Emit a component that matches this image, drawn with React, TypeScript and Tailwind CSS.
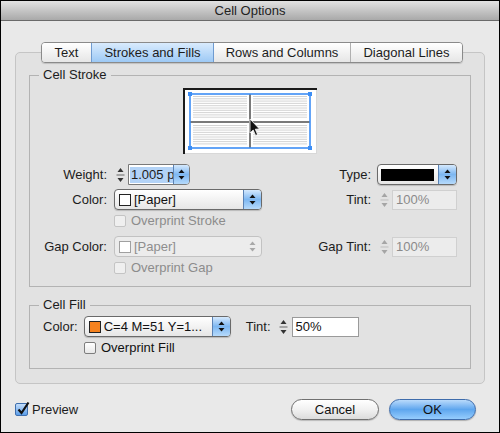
import React from 'react';

// small up/down arrow pair used by popups and steppers
function Arrows({ color = '#111', w = 7, h = 11 }: { color?: string; w?: number; h?: number }) {
  return (
    <svg width={w} height={h} viewBox="0 0 7 11">
      <polygon points="0.5,4 3.5,0.5 6.5,4" fill={color} />
      <polygon points="0.5,7 3.5,10.5 6.5,7" fill={color} />
    </svg>
  );
}

function Stepper({ disabled = false }: { disabled?: boolean }) {
  const c = disabled ? '#a5a5a5' : '#333';
  return (
    <div className="flex h-[20px] w-[14px] flex-col items-center justify-center">
      <svg width="9" height="18" viewBox="0 0 9 18">
        <polygon points="1.5,6 4.5,2 7.5,6" fill={c} />
        <line x1="0.5" y1="9" x2="8.5" y2="9" stroke={disabled ? '#bdbdbd' : '#666'} strokeWidth="1" />
        <polygon points="1.5,12 4.5,16 7.5,12" fill={c} />
      </svg>
    </div>
  );
}

function Popup({
  width,
  children,
  disabled = false,
}: {
  width: string;
  children: React.ReactNode;
  disabled?: boolean;
}) {
  if (disabled) {
    return (
      <div className={`flex h-[21px] ${width} overflow-hidden rounded-[4px] border border-[#c2c2c2] bg-[#ececec]`}>
        <div className="flex flex-1 items-center gap-[3px] pl-[4px] text-[#8e8e8e]">{children}</div>
        <div className="flex w-[18px] items-center justify-center">
          <Arrows color="#a8a8a8" />
        </div>
      </div>
    );
  }
  return (
    <div
      className={`flex h-[21px] ${width} overflow-hidden rounded-[4px] border border-[#6a6a6a] bg-linear-to-b from-white to-[#e6e6e6] shadow-[0_1px_1px_rgba(0,0,0,0.18)]`}
    >
      <div className="flex min-w-0 flex-1 items-center gap-[3px] pl-[4px] text-[#111]">{children}</div>
      <div className="flex w-[18px] items-center justify-center border-l border-[#5b82b4] bg-linear-to-b from-[#d5e9fd] via-[#7db7f1] to-[#b6dafb]">
        <Arrows />
      </div>
    </div>
  );
}

function Swatch({ color = '#fff', disabled = false }: { color?: string; disabled?: boolean }) {
  return (
    <span
      className={`inline-block h-[12px] w-[12px] shrink-0 border ${disabled ? 'border-[#a0a0a0]' : 'border-[#222]'}`}
      style={{ backgroundColor: color }}
    />
  );
}

function Checkbox({ disabled = false, label }: { disabled?: boolean; label: string }) {
  return (
    <div className="flex items-center gap-[5px]">
      <span
        className={`inline-block h-[12px] w-[12px] rounded-[2px] border ${
          disabled ? 'border-[#c4c4c4] bg-[#efefef]' : 'border-[#7d7d7d] bg-linear-to-b from-white to-[#e8e8e8]'
        }`}
      />
      <span className={disabled ? 'text-[#8c8c8c]' : 'text-[#111]'}>{label}</span>
    </div>
  );
}

function TintField({ value, disabled = false, width }: { value: string; disabled?: boolean; width: string }) {
  return (
    <div className="flex items-center gap-[1px]">
      <Stepper disabled={disabled} />
      <div
        className={`flex h-[20px] ${width} items-center border pl-[3px] ${
          disabled ? 'border-[#d0d0d0] bg-[#ececec] text-[#8a8a8a]' : 'border-[#9a9a9a] bg-white text-[#111]'
        }`}
      >
        {value}
      </div>
    </div>
  );
}

function StrokePreview() {
  const lines: React.ReactNode[] = [];
  const cells = [
    [10, 64, 8.5, 31],
    [70, 124, 8.5, 31],
    [10, 64, 37.5, 58],
    [70, 124, 37.5, 58],
  ];
  cells.forEach(([x1, x2, y1, y2], ci) => {
    for (let y = y1; y <= y2; y += 2.3) {
      lines.push(
        <line key={`${ci}-${y}`} x1={x1} y1={y} x2={x2} y2={y} stroke="#cfcfcf" strokeWidth="0.9" />
      );
    }
  });
  return (
    <svg width="134" height="66" viewBox="0 0 134 66" className="mx-auto block">
      <rect x="0" y="0" width="134" height="66" fill="#fff" />
      <line x1="0" y1="1" x2="134" y2="1" stroke="#1a1a1a" strokeWidth="2" />
      <line x1="1" y1="0" x2="1" y2="66" stroke="#1a1a1a" strokeWidth="2" />
      <line x1="133.5" y1="2" x2="133.5" y2="66" stroke="#d8d8d8" strokeWidth="1" />
      <line x1="2" y1="65.5" x2="134" y2="65.5" stroke="#d8d8d8" strokeWidth="1" />
      {lines}
      <line x1="67" y1="6" x2="67" y2="60" stroke="#7a7a7a" strokeWidth="2" />
      <line x1="7" y1="34" x2="127" y2="34" stroke="#7a7a7a" strokeWidth="2" />
      <rect x="7" y="6" width="120" height="54" fill="none" stroke="#3d8ef5" strokeWidth="1.6" />
      {[
        [7, 6],
        [127, 6],
        [7, 60],
        [127, 60],
      ].map(([x, y]) => (
        <rect key={`${x}-${y}`} x={x - 2} y={y - 2} width="4" height="4" fill="#3d8ef5" />
      ))}
      <path
        d="M67 31 L67 45 L70.2 42 L72.6 47.5 L74.6 46.6 L72.3 41.2 L76.5 41 Z"
        fill="#111"
        stroke="#fff"
        strokeWidth="0.8"
      />
    </svg>
  );
}

export default function App() {
  return (
    <div className="flex h-[433px] w-[500px] flex-col overflow-hidden border border-black bg-[#e9e9e9] font-['Liberation_Sans',Arial,sans-serif] text-[13px] leading-[16px] text-[#1c1c1c]">
      {/* title bar */}
      <div className="flex h-[20px] shrink-0 items-center justify-center border-b border-[#6a6a6a] bg-linear-to-b from-[#e2e2e2] to-[#a9a9a9] text-[#222]">
        Cell Options
      </div>

      <div className="px-[14px] pt-[21px]">
        {/* tabs */}
        <div className="relative z-10 ml-[26px] flex h-[21px] w-[422px] overflow-hidden rounded-[4px] border border-[#8a8a8a] shadow-[0_1px_1px_rgba(0,0,0,0.15)]">
          <div className="flex w-[49px] items-center justify-center bg-linear-to-b from-white to-[#e6e6e6]">Text</div>
          <div className="flex w-[123px] items-center justify-center border-x border-[#6f9bd0] bg-linear-to-b from-[#d9ebfd] to-[#9dc9f5]">
            Strokes and Fills
          </div>
          <div className="flex w-[137px] items-center justify-center border-r border-[#b0b0b0] bg-linear-to-b from-white to-[#e6e6e6]">
            Rows and Columns
          </div>
          <div className="flex flex-1 items-center justify-center bg-linear-to-b from-white to-[#e6e6e6]">
            Diagonal Lines
          </div>
        </div>

        {/* tab panel */}
        <div className="-mt-[11px] h-[332px] rounded-[5px] border border-[#c5c5c5] bg-[#e2e2e2] px-[13px] pt-[14px]">
          <fieldset className="border border-[#b3b3b3] pb-[9px]">
            <legend className="ml-[9px] px-[4px]">Cell Stroke</legend>
            <div className="mt-[5px]">
              <StrokePreview />
            </div>

            <div className="mt-[10px] flex h-[21px] items-center">
              <div className="w-[77px] text-right">Weight:</div>
              <div className="ml-[6px] flex items-center gap-[1px]">
                <Stepper />
                <div className="flex h-[21px] w-[62px] overflow-hidden rounded-r-[4px] border border-[#7a7a7a] bg-white">
                  <div className="flex flex-1 items-center overflow-hidden pl-[1px]">
                    <span className="whitespace-nowrap bg-[#b3d3f7] pl-[1px] pr-[1px]">1.005 p</span>
                  </div>
                  <div className="flex w-[16px] shrink-0 items-center justify-center border-l border-[#5b82b4] bg-linear-to-b from-[#d5e9fd] via-[#7db7f1] to-[#b6dafb]">
                    <Arrows />
                  </div>
                </div>
              </div>
              <div className="ml-auto flex items-center gap-[6px] pr-[13px]">
                <span>Type:</span>
                <div className="flex h-[21px] w-[80px] overflow-hidden rounded-[4px] border border-[#6a6a6a] bg-linear-to-b from-white to-[#e6e6e6] shadow-[0_1px_1px_rgba(0,0,0,0.18)]">
                  <div className="flex flex-1 items-center pl-[3px] pr-[4px]">
                    <div className="h-[12px] w-full bg-black" />
                  </div>
                  <div className="flex w-[18px] items-center justify-center border-l border-[#5b82b4] bg-linear-to-b from-[#d5e9fd] via-[#7db7f1] to-[#b6dafb]">
                    <Arrows />
                  </div>
                </div>
              </div>
            </div>

            <div className="mt-[4px] flex h-[21px] items-center">
              <div className="w-[77px] text-right">Color:</div>
              <div className="ml-[7px]">
                <Popup width="w-[148px]">
                  <Swatch />
                  <span>[Paper]</span>
                </Popup>
              </div>
              <div className="ml-auto flex items-center gap-[6px] pr-[13px]">
                <span>Tint:</span>
                <TintField value="100%" disabled width="w-[65px]" />
              </div>
            </div>

            <div className="mt-[2px] flex h-[18px] items-center pl-[84px]">
              <Checkbox disabled label="Overprint Stroke" />
            </div>

            <div className="mt-[6px] flex h-[21px] items-center">
              <div className="w-[77px] text-right">Gap Color:</div>
              <div className="ml-[7px]">
                <Popup width="w-[148px]" disabled>
                  <Swatch disabled />
                  <span>[Paper]</span>
                </Popup>
              </div>
              <div className="ml-auto flex items-center gap-[6px] pr-[13px]">
                <span>Gap Tint:</span>
                <TintField value="100%" disabled width="w-[65px]" />
              </div>
            </div>

            <div className="mt-[2px] flex h-[18px] items-center pl-[84px]">
              <Checkbox disabled label="Overprint Gap" />
            </div>
          </fieldset>

          <fieldset className="mt-[10px] border border-[#b3b3b3] pb-[11px]">
            <legend className="ml-[9px] px-[4px]">Cell Fill</legend>
            <div className="mt-[3px] flex h-[21px] items-center pl-[13px]">
              <span>Color:</span>
              <div className="ml-[6px]">
                <Popup width="w-[147px]">
                  <Swatch color="#f5821f" />
                  <span className="whitespace-nowrap">C=4 M=51 Y=1...</span>
                </Popup>
              </div>
              <span className="ml-[15px]">Tint:</span>
              <div className="ml-[6px]">
                <TintField value="50%" width="w-[67px]" />
              </div>
            </div>
            <div className="mt-[2px] flex h-[18px] items-center pl-[54px]">
              <Checkbox label="Overprint Fill" />
            </div>
          </fieldset>
        </div>

        {/* footer */}
        <div className="mt-[15px] flex h-[21px] items-center pr-[9px]">
          <div className="flex items-center gap-[4px]">
            <span className="relative inline-block h-[13px] w-[13px] rounded-[2px] border border-[#3f6fae] bg-linear-to-b from-[#c4defa] to-[#5a9de8]">
              <svg className="absolute -top-[3px] left-[0px]" width="14" height="15" viewBox="0 0 14 15">
                <path d="M2.5 8.5 L5.5 12 L12.5 1.5" fill="none" stroke="#111" strokeWidth="2.2" />
              </svg>
            </span>
            <span>Preview</span>
          </div>
          <div className="ml-auto flex gap-[10px]">
            <button className="flex h-[21px] w-[88px] items-center justify-center rounded-full border border-[#707070] bg-linear-to-b from-white via-[#f1f1f1] to-[#dcdcdc] text-[#111] shadow-[0_1px_1px_rgba(0,0,0,0.2)]">
              Cancel
            </button>
            <button className="flex h-[21px] w-[87px] items-center justify-center rounded-full border border-[#3e6cab] bg-linear-to-b from-[#b9dafb] via-[#5ea6ee] to-[#96cdfd] text-[#111] shadow-[0_1px_1px_rgba(0,0,0,0.25)]">
              OK
            </button>
          </div>
        </div>
      </div>
    </div>
  );
}
